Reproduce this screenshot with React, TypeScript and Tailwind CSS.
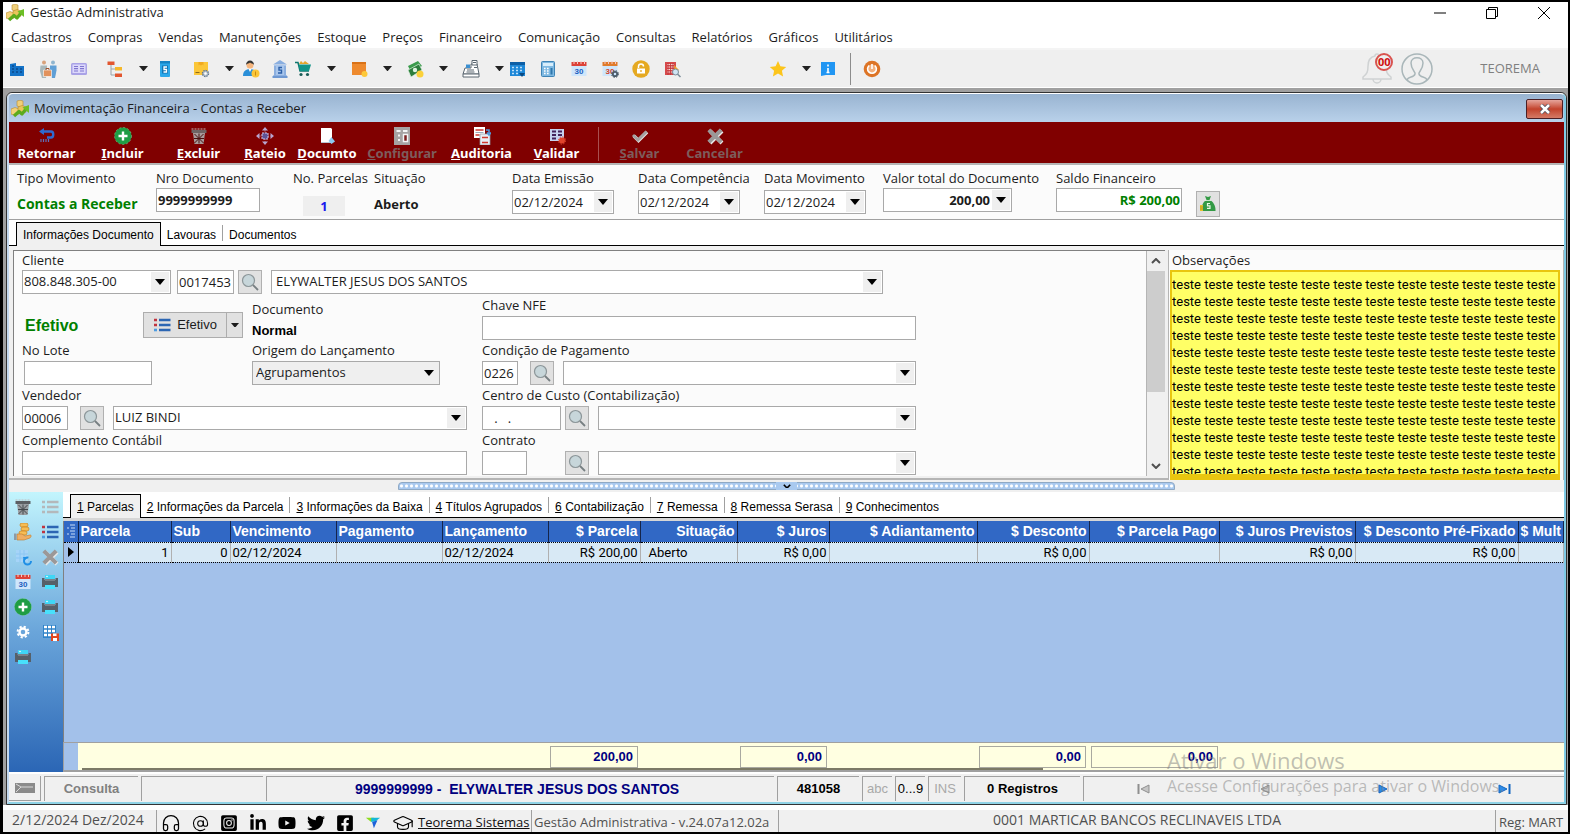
import React, { useState } from "react";
import {
  FaFacebookSquare,
  FaInstagramSquare,
  FaLinkedinIn,
  FaTwitter,
  FaYoutube,
} from "react-icons/fa";
import { AtSign, GraduationCap, Headphones } from "lucide-react";

type IconProps = { className?: string };

const Svg = ({
  children,
  className = "size-[18px]",
}: {
  children: React.ReactNode;
  className?: string;
}) => (
  <svg
    viewBox="0 0 18 18"
    className={`${className} shrink-0`}
    fill="none"
    aria-hidden="true"
  >
    {children}
  </svg>
);

/* ---------- icons ---------- */

const Logo = () => (
  <Svg>
    <path d="M6 1l3-.8L12 1v5L9 7 6 6z" fill="#efcf7a" stroke="#b98a2c" strokeWidth=".6" />
    <path d="M0 9l4-1.500L8 9v5l-4 1.500L0 14z" fill="#f3d27a" stroke="#b98a2c" strokeWidth=".6" />
    <path d="M7 7l4-1.500L15 7v5l-4 1.500L7 12z" fill="#e9c45c" stroke="#b98a2c" strokeWidth=".6" />
    <path
      d="M3 16l5-4.500 3 2.500 4-5"
      stroke="#5cab1c"
      strokeWidth="3.200"
      strokeLinejoin="round"
    />
    <path d="M11.500 7.500L18 5v8z" fill="#6cbf26" />
  </Svg>
);

const Companies = () => (
  <Svg>
    <path d="M2 4l6-1v3h8v10H2z" fill="#1473c8" />
    <path
      d="M4 6h2M4 9h2M8 9h2M12 9h2M4 12h2M8 12h2M12 12h2"
      stroke="#0b4b8d"
      strokeWidth="1.300"
    />
  </Svg>
);

const People = () => (
  <Svg>
    <circle cx="5" cy="2.500" r="2" fill="#d9a27b" />
    <circle cx="14" cy="2.500" r="2" fill="#8fb5cf" />
    <path d="M1.500 5.500H8v5l-1 7.500H3L1 11z" fill="#a9b7b9" />
    <path d="M11 5.500h6.500v5L16 18h-3l-2-7z" fill="#5f9fd6" />
    <path d="M4.500 10h8v6.500h-8z" fill="#e2925c" stroke="#fff" strokeWidth=".6" />
    <path d="M7 10V8.500h3V10" stroke="#a0522d" />
  </Svg>
);

const Card = () => (
  <Svg>
    <rect x="1" y="3" width="16" height="12" rx="1.500" fill="#a9a2e6" />
    <rect x="2.500" y="4.500" width="13" height="8.500" fill="#dcd8fb" />
    <path d="M4 6.500h4M4 8.700h4M4 11h4M10 6.500h4M10 8.700h4M10 11h4" stroke="#7f76cf" strokeWidth="1.200" />
  </Svg>
);

const Tree = () => (
  <Svg>
    <path d="M5 4v11h4M5 9h4" stroke="#9aa3a8" />
    <path d="M1.500 1.500h7V5h-7z" fill="#e2562f" />
    <path d="M9 7h7v3.500H9z" fill="#f5b82a" />
    <path d="M9 13.500h7V17H9z" fill="#e2562f" />
  </Svg>
);

const Phone = () => (
  <Svg>
    <rect x="4" y="1" width="10" height="16" rx="1" fill="#2ba8ea" />
    <rect x="4" y="1" width="10" height="2.500" fill="#1683c4" />
    <path d="M6 5.500h6v8H6z" fill="#1174b4" />
    <path d="M11 7H8v2.500h2.500V12h-3" stroke="#fff" strokeWidth="1.300" />
  </Svg>
);

const Box = () => (
  <Svg>
    <path d="M2 2h14v13H2z" fill="#fbc638" />
    <path d="M6.500 2h5v3.500l-1-1-1.500 1-1.500-1-1 1z" fill="#f1a91f" />
    <path d="M3.500 12.500h4" stroke="#8c6a1a" />
    <circle cx="13.500" cy="13.500" r="3" fill="#b9c4cf" stroke="#63788d" strokeWidth="1.400" strokeDasharray="1.500 .8" />
    <circle cx="13.500" cy="13.500" r="1.200" fill="#fff" />
  </Svg>
);

const Person = () => (
  <Svg>
    <circle cx="8" cy="5" r="3.500" fill="#f6b57c" />
    <path d="M4 5c0-6 8-6 8 0-1-2-3-1-4-2.500C7 4 5 3 4 5z" fill="#333" />
    <path d="M1 16c0-5 3-7 7-7s7 2 7 7z" fill="#2a8fd8" />
    <path d="M6.500 9h3L8 12z" fill="#fff" />
    <circle cx="13.500" cy="13.500" r="4" fill="#fbc638" />
    <path d="M13.500 11.500v4" stroke="#c98c10" />
  </Svg>
);

const Bank = () => (
  <Svg>
    <path d="M9 0l7 4.500H2z" fill="#89aee0" />
    <path d="M3 5h12v11H3z" fill="#a9c6ec" />
    <path d="M2 16h14v2H2zM4 6v9M14 6v9" fill="#6f98d2" stroke="#6f98d2" />
    <path d="M11 7.500H8v2.600h2.500V13H7" stroke="#2b5fa8" strokeWidth="1.400" />
  </Svg>
);

const Cart = () => (
  <Svg>
    <path d="M5 4l2-3 2 2 2-2 4 3z" fill="#e2a52e" />
    <path d="M1 2.500h3L6 11h9" stroke="#0f766e" strokeWidth="1.500" />
    <path d="M4.500 4.500H17L15 11H6z" fill="#109488" />
    <circle cx="7" cy="14.500" r="1.600" fill="#195b57" />
    <circle cx="13.500" cy="14.500" r="1.600" fill="#195b57" />
  </Svg>
);

const OrangeBox = () => (
  <Svg>
    <path d="M2 2h14v13H2z" fill="#ee8a2e" />
    <path d="M2 2h14v2H2z" fill="#d97218" />
    <circle cx="14.500" cy="14" r="3" fill="#fdc93a" />
  </Svg>
);

const Money = () => (
  <Svg>
    <path d="M2 6l10-5 4 5-11 6z" fill="#3a9b4c" />
    <path d="M2 10l11-6 3 6-11 7z" fill="#2c7d3c" stroke="#dff3e1" strokeWidth=".7" />
    <circle cx="9" cy="10" r="2.200" fill="#dff3e1" />
    <circle cx="14" cy="14" r="3.500" fill="#fbd13a" />
  </Svg>
);

const Register = () => (
  <Svg>
    <path d="M9 4h6l2 10H1l2-6h6z" fill="#fff" stroke="#5a6670" />
    <path d="M10 .5h5V5h-5zM1 14h16v3H1z" fill="#fff" stroke="#5a6670" />
    <path d="M11 2.500h3M5 10h7M4.500 12h8M12 7.500h3" stroke="#5a6670" />
    <path d="M4 4.500h4V8H4z" fill="#3b8fd0" />
  </Svg>
);

const CalendarBlue = () => (
  <Svg>
    <path d="M2 2h15v14H2z" fill="#1e88d8" />
    <path d="M2 2h15v3H2z" fill="#0d5fa6" />
    <path
      d="M4 7.500h2M8 7.500h2M12 7.500h2M4 10.500h2M8 10.500h2M12 10.500h2M4 13.500h2M8 13.500h2"
      stroke="#bfe0fa"
      strokeWidth="1.700"
    />
    <path d="M11 13h6l-3 4z" fill="#0a4a83" />
  </Svg>
);

const Calculator = () => (
  <Svg>
    <rect x="2.500" y="1.500" width="13" height="15" rx="1" fill="#7fb9e2" stroke="#3e83b5" />
    <path d="M4 3h10v3H4z" fill="#d8eefb" />
    <path
      d="M5 8.500h1.600M8 8.500h1.600M5 11h1.600M8 11h1.600M5 13.500h1.600M8 13.500h1.600"
      stroke="#fff"
      strokeWidth="1.500"
    />
    <path d="M11.500 8h2v6.500h-2z" fill="#2f77ad" />
  </Svg>
);

const Calendar30 = ({ gear }: { gear?: boolean }) => (
  <Svg>
    <path d="M1.500 5h15v11h-15z" fill="#cfe6fb" />
    <path d="M1.500 2h15v4h-15z" fill={gear ? "#e07b2c" : "#dd4238"} />
    <path d="M4 1v3M7.500 1v3M11 1v3M14.500 1v3" stroke="#f3c9c5" />
    <text
      x="9"
      y="13.500"
      textAnchor="middle"
      fontSize="8"
      fontWeight="bold"
      fontFamily="Liberation Sans, sans-serif"
      fill={gear ? "#d2452b" : "#1d5fbf"}
    >
      30
    </text>
    {gear && (
      <>
        <circle cx="14" cy="14" r="2.200" stroke="#4b5b68" strokeWidth="1.800" />
        <circle cx="14" cy="14" r="3.500" stroke="#4b5b68" strokeDasharray="1.400 1.400" />
      </>
    )}
  </Svg>
);

const Lock = () => (
  <Svg>
    <circle cx="9" cy="9" r="8.700" fill="#e5a921" />
    <path d="M5 8.500h8v5H5z" fill="#fff" />
    <path d="M6.500 8V6.500a2.500 2.500 0 015 0" stroke="#fff" strokeWidth="1.500" />
    <path d="M9 10v2" stroke="#e5a921" strokeWidth="1.300" />
  </Svg>
);

const SheetSearch = () => (
  <Svg>
    <path d="M2 2h11v13H2z" fill="#d6494b" />
    <path d="M4 4.500h7M4 7h7M4 9.500h7M4 12h7" stroke="#f7d3d3" strokeWidth="1.200" />
    <path d="M5 3v12M7.500 3v12M10 3v12" stroke="#b93337" strokeWidth=".8" />
    <path d="M11 5l5 5-4 3z" fill="#f0a52c" />
    <circle cx="12.500" cy="12" r="3" fill="#cfe4f3" stroke="#7b8c99" />
    <path d="M14.500 14l3 3" stroke="#7b8c99" strokeWidth="1.500" />
  </Svg>
);

const Star = () => (
  <Svg>
    <path d="M9 1l2.400 5.300 5.800.6-4.300 3.900 1.200 5.700L9 13.600l-5.100 2.900 1.200-5.700L.8 6.900l5.800-.6z" fill="#fcc51c" />
  </Svg>
);

const Info = () => (
  <Svg>
    <path d="M2 2h14v13H7l-5 1z" fill="#2196f3" />
    <path d="M9 4.500v2M9 8v4.500M7.500 12.500h3" stroke="#fff" strokeWidth="1.600" />
  </Svg>
);

const Power = () => (
  <Svg>
    <circle cx="9" cy="9" r="8.300" fill="#dd7426" />
    <circle cx="9" cy="9" r="4.600" fill="#f3b07d" />
    <path d="M6.200 5.500a4.400 4.400 0 105.600 0M9 4v5" stroke="#fff" strokeWidth="1.600" />
  </Svg>
);

const Back = () => (
  <Svg>
    <path d="M4 4.500h9c3 0 3 6 0 6H9" stroke="#2f6bd0" strokeWidth="2.400" />
    <path d="M1 4.500L6 1v7z" fill="#2f6bd0" />
    <path d="M3 12v3M5.500 12v3M8 12v3M10.500 12v3" stroke="#5f6fb8" strokeWidth="1.200" />
  </Svg>
);

const Plus = () => (
  <Svg>
    <circle cx="9" cy="9" r="8.500" fill="#1f9d45" />
    <circle cx="9" cy="9" r="8.500" stroke="#7fcf95" strokeWidth=".6" strokeDasharray="2 2" />
    <path d="M9 4.500v9M4.500 9h9" stroke="#fff" strokeWidth="2.400" />
  </Svg>
);

const Trash = ({ light }: { light?: boolean }) => (
  <Svg>
    <path d="M1.500 3h15v3h-15z" fill={light ? "#6f6363" : "#5b5f63"} />
    <path d="M3 6h12l-1.500 11h-9z" fill={light ? "#a79b9b" : "#9a9ea2"} />
    <path
      d="M4.500 7l9 9M13.500 7l-9 9M4 11.500h10M9 6.500v10"
      stroke={light ? "#4a1010" : "#44484c"}
    />
    <path d="M1.500 2h15" stroke="#c3bcbc" strokeDasharray="2 1" />
  </Svg>
);

const Move = () => (
  <Svg>
    <path
      d="M9 0l3 3.500H6zM9 18l3-3.500H6zM0 9l3.500-3v6zM18 9l-3.500-3v6z"
      fill="#b8a5cf"
    />
    <rect x="6" y="6" width="6" height="6" fill="#5f5496" stroke="#d5c8e6" strokeDasharray="2 1" />
    <path d="M9 3.500V6M9 12v2.500M3.500 9H6M12 9h2.500" stroke="#b8a5cf" strokeDasharray="1 1" />
  </Svg>
);

const Doc = () => (
  <Svg>
    <path d="M3 1h10l1 1v14H3z" fill="#fff" />
    <path d="M3 15.500h10" stroke="#b7c6d4" />
    <path d="M13.500 10l3.500 4.500-3.500 2.500-3-3z" fill="#8cc9f0" />
  </Svg>
);

const Config = () => (
  <Svg>
    <path d="M1 0h16v18H1z" fill="#a6a3a3" />
    <path d="M3.500 4h4M10 4h4.500M5 8.500h2M5 13h2" stroke="#f4f4f4" strokeWidth="2" />
    <path d="M10.500 7.500h4v7h-4z" stroke="#f4f4f4" strokeWidth="1.500" fill="#7d2020" />
  </Svg>
);

const Audit = () => (
  <Svg>
    <path d="M1 0h11v11H1z" fill="#fff" />
    <path d="M2.500 3h8M2.500 8h4" stroke="#d03a30" strokeWidth="1.500" />
    <path d="M2.500 5.500h8" stroke="#99aabb" />
    <path d="M7 7h10v11H7z" fill="#e7edf3" stroke="#8c99a6" strokeWidth=".7" />
    <path d="M9 10.500h6M9 15.500h6" stroke="#d03a30" strokeWidth="1.300" />
    <path d="M13 3h3v4M14 5.500l2 2.500 2-2.500" stroke="#4d9be0" strokeWidth="1.500" />
  </Svg>
);

const Validate = () => (
  <Svg>
    <path d="M2 2h14v12H2z" fill="#c6d2ee" />
    <path d="M4 4.500h4M10 4.500h4M4 8h4M10 8h4M4 11.500h4" stroke="#43215a" strokeWidth="1.800" />
    <circle cx="14" cy="13.500" r="3" fill="#e0442c" />
    <circle cx="14" cy="13.500" r="3.600" stroke="#e0442c" strokeDasharray="1.500 1.300" />
  </Svg>
);

const Check = () => (
  <Svg>
    <path d="M3 9l4.500 4.500L16 5" stroke="#e8e8e8" strokeWidth="3.500" />
    <path d="M2 8l5 5 8.500-8.500" stroke="#a5a1a1" strokeWidth="3" />
  </Svg>
);

const Cross = () => (
  <Svg>
    <path d="M4 4l12 12M16 4L4 16" stroke="#e8e8e8" strokeWidth="4" />
    <path d="M2.800 2.800l12.400 12.400M15.200 2.800L2.800 15.200" stroke="#9b9898" strokeWidth="4" />
  </Svg>
);

const List = ({ gray }: { gray?: boolean }) => (
  <Svg>
    <path d="M6 4h11.500M6 9h11.500M6 14h11.500" stroke={gray ? "#b4b8bb" : "#2c66b3"} strokeWidth="2.400" />
    <path d="M1 4h3M1 9h3" stroke={gray ? "#b4b8bb" : "#c0343f"} strokeWidth="2.600" />
    <path d="M1 14h3" stroke={gray ? "#b4b8bb" : "#4c9be0"} strokeWidth="2.600" />
  </Svg>
);

const Coins = () => (
  <Svg>
    <rect x="6" y="0" width="8" height="4" rx="2" fill="#f6bd55" stroke="#c9821e" strokeWidth=".7" />
    <rect x="7" y="4" width="8" height="4" rx="2" fill="#f6bd55" stroke="#c9821e" strokeWidth=".7" />
    <rect x="5" y="8" width="8" height="4" rx="2" fill="#f6bd55" stroke="#c9821e" strokeWidth=".7" />
    <path d="M3 11h5l3 2 5-1c2 0 1 2 0 3l-6 2H3z" fill="#efae62" stroke="#c07a2a" strokeWidth=".6" />
    <path d="M0 10.500h2.500V17H0z" fill="#8e9aa3" />
  </Svg>
);

const GridRefresh = () => (
  <Svg>
    <path d="M2 2h12v12H2z" fill="#a6d4f8" />
    <path d="M2 6h12M2 10h12M6 2v12M10 2v12" stroke="#8cc6f3" />
    <circle cx="13.500" cy="13" r="3.500" stroke="#1f8fe6" strokeWidth="2" strokeDasharray="17 5" />
    <path d="M9 9h5l-4 4z" fill="#1f8fe6" />
  </Svg>
);

const Printer = () => (
  <Svg>
    <path d="M4 2h10v4H4z" fill="#3fd6f5" />
    <path d="M1 5h2.500v2h11V5H17v9H1z" fill="#566069" />
    <path d="M4 6h10v2H4z" fill="#77828b" />
    <path d="M4 12h10v4H4z" fill="#48e0fb" />
    <circle cx="6" cy="3.500" r=".8" fill="#fff" />
  </Svg>
);

const Gear = () => (
  <Svg>
    <circle cx="9" cy="9" r="3.500" stroke="#fff" strokeWidth="2.400" />
    <circle cx="9" cy="9" r="5.400" stroke="#fff" strokeWidth="2" strokeDasharray="2.200 2.040" />
  </Svg>
);

const GridSave = () => (
  <Svg>
    <path d="M2 2h13v13H2z" fill="#2f83c9" />
    <path
      d="M3 4h3M7 4h3M11 4h3M3 8h3M7 8h3M11 8h3M3 12h3M7 12h3"
      stroke="#fff"
      strokeWidth="2.600"
    />
    <path d="M10 10.500h8V18h-8z" fill="#e3471f" />
    <path d="M12 10.500h3.500v2.500H12zM12 15h4v3h-4z" fill="#fff" />
  </Svg>
);

const MoneyBag = () => (
  <Svg>
    <path d="M6 1l3 1 3-1-1.500 4c3 1 6.500 5 6 11H3C2 11 4 7 7.500 5z" fill="#339a45" />
    <path d="M6 5.500h6" stroke="#e9f7e5" strokeWidth=".8" />
    <path d="M11 8.500H8.500v2.300H11v2.600H8" stroke="#e9f7e5" strokeWidth="1.200" />
    <path d="M1 10h3v6H1z" fill="#e6c22e" />
    <path d="M1 12h3M1 14h3" stroke="#a88712" strokeWidth=".7" />
  </Svg>
);

const Magnifier = () => (
  <Svg>
    <circle cx="7.500" cy="7.500" r="6" fill="#c7d6da" stroke="#8c9699" strokeWidth="1.200" />
    <path d="M12 12l5 5" stroke="#777f82" strokeWidth="1.800" />
  </Svg>
);

const TeoremaMark = () => (
  <Svg className="size-4">
    <path d="M1 3h9l-3 5z" fill="#8edb1f" />
    <path d="M7 3h10l-5 4-5 1z" fill="#14b7d8" />
    <path d="M8 8l6-2-4 9z" fill="#1d62d8" />
  </Svg>
);

const Caret = ({ className = "w-[10px]" }: IconProps) => (
  <svg viewBox="0 0 10 6" className={`${className} shrink-0`} aria-hidden="true">
    <path d="M0 0h10L5 6z" fill="currentColor" />
  </svg>
);

/* ---------- data ---------- */

const menus = [
  "Cadastros",
  "Compras",
  "Vendas",
  "Manutenções",
  "Estoque",
  "Preços",
  "Financeiro",
  "Comunicação",
  "Consultas",
  "Relatórios",
  "Gráficos",
  "Utilitários",
];

const shortcuts: {
  label: string;
  icon: React.ReactNode;
  width: string;
  menu?: boolean;
}[] = [
  { label: "Empresas", icon: <Companies />, width: "w-[31px]" },
  { label: "Clientes", icon: <People />, width: "w-[31px]" },
  { label: "Cartões", icon: <Card />, width: "w-9" },
  { label: "Plano de contas", icon: <Tree />, width: "w-[50px]", menu: true },
  { label: "Celular", icon: <Phone />, width: "w-9" },
  { label: "Produtos", icon: <Box />, width: "w-[50px]", menu: true },
  { label: "Vendedores", icon: <Person />, width: "w-[29px]" },
  { label: "Bancos", icon: <Bank />, width: "w-[23px]" },
  { label: "Pedidos", icon: <Cart />, width: "w-14", menu: true },
  { label: "Entradas", icon: <OrangeBox />, width: "w-14", menu: true },
  { label: "Contas", icon: <Money />, width: "w-14", menu: true },
  { label: "Caixa", icon: <Register />, width: "w-[46px]", menu: true },
  { label: "Agenda", icon: <CalendarBlue />, width: "w-[31px]" },
  { label: "Calculadora", icon: <Calculator />, width: "w-[31px]" },
  { label: "Calendário", icon: <Calendar30 />, width: "w-[31px]" },
  { label: "Vencimentos", icon: <Calendar30 gear />, width: "w-[31px]" },
  { label: "Bloquear", icon: <Lock />, width: "w-[31px]" },
  { label: "Consultar", icon: <SheetSearch />, width: "w-[106px]" },
  { label: "Favoritos", icon: <Star />, width: "w-[50px]", menu: true },
  { label: "Informações", icon: <Info />, width: "w-[31px]" },
];

const actions: {
  label: string;
  icon: React.ReactNode;
  width: string;
  underline?: boolean;
  disabled?: boolean;
}[] = [
  { label: "Retornar", icon: <Back />, width: "w-[75px]" },
  { label: "Incluir", icon: <Plus />, width: "w-[77px]", underline: true },
  { label: "Excluir", icon: <Trash light />, width: "w-[75px]", underline: true },
  { label: "Rateio", icon: <Move />, width: "w-[58px]", underline: true },
  { label: "Documto", icon: <Doc />, width: "w-[66px]", underline: true },
  { label: "Configurar", icon: <Config />, width: "w-[84px]", underline: true, disabled: true },
  { label: "Auditoria", icon: <Audit />, width: "w-[75px]", underline: true },
  { label: "Validar", icon: <Validate />, width: "w-[75px]", underline: true },
  { label: "Salvar", icon: <Check />, width: "w-[75px]", underline: true, disabled: true },
  { label: "Cancelar", icon: <Cross />, width: "w-[75px]", disabled: true },
];

const docTabs = ["Informações Documento", "Lavouras", "Documentos"];

const gridTabs = [
  "1 Parcelas",
  "2 Informações da Parcela",
  "3 Informações da Baixa",
  "4 Títulos Agrupados",
  "6 Contabilização",
  "7 Remessa",
  "8 Remessa Serasa",
  "9 Conhecimentos",
];

const columns = [
  { title: "Parcela", width: "w-[93px]", value: "1", right: true },
  { title: "Sub", width: "w-[59px]", value: "0", right: true },
  { title: "Vencimento", width: "w-[106px]", value: "02/12/2024" },
  { title: "Pagamento", width: "w-[106px]", value: "" },
  { title: "Lançamento", width: "w-[106px]", value: "02/12/2024" },
  { title: "$ Parcela", width: "w-[92px]", value: "R$ 200,00", right: true, money: true },
  { title: "Situação", width: "w-[97px]", value: "Aberto", money: true },
  { title: "$ Juros", width: "w-[92px]", value: "R$ 0,00", right: true, money: true },
  { title: "$ Adiantamento", width: "w-[148px]", value: "", money: true },
  { title: "$ Desconto", width: "w-[112px]", value: "R$ 0,00", right: true, money: true },
  { title: "$ Parcela Pago", width: "w-[130px]", value: "", money: true },
  { title: "$ Juros Previstos", width: "w-[136px]", value: "R$ 0,00", right: true, money: true },
  { title: "$ Desconto Pré-Fixado", width: "w-[163px]", value: "R$ 0,00", right: true, money: true },
  { title: "$ Mult", width: "", value: "" },
];

const sideTools = [
  { label: "Excluir parcela", icon: <Trash /> },
  { label: "Lista", icon: <List gray /> },
  { label: "Baixar", icon: <Coins /> },
  { label: "Detalhes", icon: <List /> },
  { label: "Recalcular", icon: <GridRefresh /> },
  { label: "Cancelar parcela", icon: <Cross /> },
  { label: "Prorrogar", icon: <Calendar30 /> },
  { label: "Imprimir boleto", icon: <Printer /> },
  { label: "Nova parcela", icon: <Plus /> },
  { label: "Imprimir recibo", icon: <Printer /> },
  { label: "Configurar grade", icon: <Gear /> },
  { label: "Salvar grade", icon: <GridSave /> },
  { label: "Imprimir", icon: <Printer /> },
];

const NOTES = Array(13).fill(Array(12).fill("teste").join(" ")).join("\n");

/* ---------- form controls ---------- */

const FIELD = "h-6 border border-[#a9a9a9] text-[13px] outline-none";

const TextField = ({
  id,
  label,
  value = "",
  className,
}: {
  id?: string;
  label?: string;
  value?: string;
  className: string;
}) => (
  <input
    id={id}
    aria-label={label}
    defaultValue={value}
    className={`${FIELD} bg-white px-px ${className}`}
  />
);

const Combo = ({
  id,
  label,
  value = "",
  className = "",
  gray = false,
  inner = "pl-[3px]",
}: {
  id?: string;
  label?: string;
  value?: string;
  className?: string;
  gray?: boolean;
  inner?: string;
}) => (
  <div className={`relative ${className}`}>
    <select
      id={id}
      aria-label={label}
      className={`${FIELD} block w-full appearance-none ${
        gray ? "bg-[#efefef]" : "bg-white"
      } ${inner}`}
    >
      <option>{value}</option>
    </select>
    <span className="pointer-events-none absolute inset-y-0.5 right-0.5 flex w-[18px] items-center justify-center bg-[#efefef] text-black">
      <Caret />
    </span>
  </div>
);

const SearchButton = ({ label }: { label: string }) => (
  <button
    aria-label={label}
    className="flex size-6 shrink-0 items-center justify-center border border-[#b0b0b0] bg-[#e1e1e1]"
  >
    <Magnifier />
  </button>
);

const Field = ({
  label,
  htmlFor,
  children,
  first = false,
}: {
  label: string;
  htmlFor?: string;
  children: React.ReactNode;
  first?: boolean;
}) => (
  <div>
    <label
      htmlFor={htmlFor}
      className={`block whitespace-nowrap ${
        first ? "leading-[19px]" : "leading-[21px]"
      }`}
    >
      {label}
    </label>
    <div className="flex">{children}</div>
  </div>
);

/* ---------- sections ---------- */

const MainToolbar = () => (
  <div className="flex h-[38px] items-center border-b border-white bg-[#efefef] pl-[5px] text-[#222]">
    {shortcuts.map((item) => (
      <button
        key={item.label}
        aria-label={item.label}
        className={`flex shrink-0 items-center gap-[15px] ${item.width}`}
      >
        {item.icon}
        {item.menu && <Caret className="w-[9px]" />}
      </button>
    ))}
    <span className="h-8 w-px bg-[#8c8c8c]" />
    <button aria-label="Sair" className="ml-3">
      <Power />
    </button>
    <div className="ml-auto flex items-center pr-7">
      <button aria-label="Notificações" className="relative mr-2">
        <svg viewBox="0 0 32 36" className="h-9 w-8" fill="none" aria-hidden="true">
          <path
            d="M14 5a2 2 0 014 0c5 1 7 5 7 10 0 6 1 8 5 11v2H2v-2c4-3 5-5 5-11 0-5 2-9 7-10zM12 28a4 4 0 008 0"
            stroke="#cfd2d3"
            strokeWidth="1.500"
          />
        </svg>
        <span className="absolute right-0 top-0.5 flex size-[18px] items-center justify-center rounded-full border-2 border-[#d9534f] bg-[#efefef] text-[11px] font-bold leading-none text-[#d01010]">
          00
        </span>
      </button>
      <svg viewBox="0 0 32 32" className="mr-[47px] size-8" fill="none" aria-hidden="true">
        <circle cx="16" cy="16" r="15" stroke="#a9b6b9" strokeWidth="1.500" />
        <path
          d="M6 27c1-4 7-2 8-6 1-2-4-4-4-11 0-7 12-7 12 0 0 7-5 9-4 11 1 4 7 2 8 6"
          stroke="#a9b6b9"
          strokeWidth="1.500"
        />
      </svg>
      <span className="text-[13px] text-[#808080]">TEOREMA</span>
    </div>
  </div>
);

const ActionBar = () => (
  <div className="flex h-[41px] bg-[#800000] pt-[5px]">
    {actions.map((action) => (
      <React.Fragment key={action.label}>
        {action.label === "Salvar" && (
          <span className="ml-1 mr-[3px] h-[34px] w-px bg-[#a85050]" />
        )}
        <button
          disabled={action.disabled}
          className={`flex shrink-0 flex-col items-center font-['Noto_Sans','Open_Sans',sans-serif] text-[13px] font-bold leading-4 ${
            action.width
          } ${action.disabled ? "text-[#7d5c5c]" : "text-white"}`}
        >
          {action.icon}
          <span>
            {action.underline ? (
              <>
                <u>{action.label[0]}</u>
                {action.label.slice(1)}
              </>
            ) : (
              action.label
            )}
          </span>
        </button>
      </React.Fragment>
    ))}
  </div>
);

const dateFields = [
  { label: "Data Emissão", width: "w-[126px]" },
  { label: "Data Competência", width: "w-[126px]" },
  { label: "Data Movimento", width: "w-[119px]" },
];

const HeaderPanel = () => (
  <div className="flex h-[57px] border-b border-t-2 border-b-[#a0a0a0] border-t-[#b5b5b5] bg-[#fbfbfb] pl-2 pt-[3px] leading-5">
    <div className="w-[139px] shrink-0">
      <div>Tipo Movimento</div>
      <div className="pt-1.5 text-sm font-bold leading-5 text-[#008000]">
        Contas a Receber
      </div>
    </div>
    <div className="w-[137px] shrink-0">
      <label htmlFor="nro" className="block">
        Nro Documento
      </label>
      <TextField id="nro" value="9999999999" className="w-[104px] font-bold" />
    </div>
    <div className="w-[81px] shrink-0">
      <div className="whitespace-nowrap">No. Parcelas</div>
      <div className="ml-2.5 mt-2 w-[42px] bg-[#efefef] text-center font-bold leading-5 text-[#1a1aee]">
        1
      </div>
    </div>
    <div className="w-[138px] shrink-0">
      <div>Situação</div>
      <div className="pt-1.5 font-bold">Aberto</div>
    </div>
    {dateFields.map(({ label, width }) => (
      <div key={label} className={`shrink-0 ${width}`}>
        <label htmlFor={label} className="block whitespace-nowrap">
          {label}
        </label>
        <Combo id={label} value="02/12/2024" className="mt-0.5 w-[102px]" inner="pl-px" />
      </div>
    ))}
    <div className="w-[173px] shrink-0">
      <label htmlFor="valor" className="block whitespace-nowrap">
        Valor total do Documento
      </label>
      <Combo
        id="valor"
        value="200,00"
        className="w-[129px]"
        inner="pr-[21px] text-right [text-align-last:right] font-bold"
      />
    </div>
    <div className="flex flex-1 items-end gap-[14px] pb-0.5">
      <div className="self-start">
        <label htmlFor="saldo" className="block">
          Saldo Financeiro
        </label>
        <TextField
          id="saldo"
          value="R$ 200,00"
          className="w-[126px] text-right font-bold text-[#008000]"
        />
      </div>
      <button
        aria-label="Ver saldo"
        className="flex h-[26px] w-6 items-center justify-center border border-[#b0b0b0] bg-[#e1e1e1]"
      >
        <MoneyBag />
      </button>
    </div>
  </div>
);

const Tabs = ({
  tabs,
  active,
  onChange,
  mnemonic = false,
}: {
  tabs: string[];
  active: number;
  onChange: (i: number) => void;
  mnemonic?: boolean;
}) => (
  <div
    role="tablist"
    className="flex h-[26px] items-end border-b border-black bg-white font-['Liberation_Sans',sans-serif] text-xs text-black"
  >
    {tabs.map((tab, i) => (
      <div key={tab} className="flex items-end">
        {i > active + 1 && <span className="mb-1 h-4 w-px bg-[#a0a0a0]" />}
        <button
          role="tab"
          aria-selected={active === i}
          onClick={() => onChange(i)}
          className={`whitespace-nowrap px-1.5 pt-0.5 leading-5 ${
            active === i
              ? "-mb-px ml-[7px] border border-b-0 border-black bg-[#f0f0f0] pb-px"
              : ""
          }`}
        >
          {mnemonic ? (
            <>
              <u>{tab[0]}</u>
              {tab.slice(1)}
            </>
          ) : (
            tab
          )}
        </button>
      </div>
    ))}
  </div>
);

const DocumentForm = () => (
  <div className="flex h-[234px] gap-[3px] border-b-2 border-[#b5b5b5] bg-[#f0f0f0] pb-0.5 pt-1">
    <div className="ml-1 flex min-w-0 flex-1 border-l border-t border-[#808080] bg-[#fbfbfb]">
      <div className="min-w-0 flex-1 overflow-hidden pl-2">
        <Field label="Cliente" htmlFor="cliente" first>
          <Combo id="cliente" value="808.848.305-00" className="w-[149px]" inner="pl-px" />
          <TextField label="Código do cliente" value="0017453" className="ml-1.5 mr-1 w-[57px]" />
          <SearchButton label="Buscar cliente" />
          <Combo
            label="Nome do cliente"
            value="ELYWALTER JESUS DOS SANTOS"
            className="ml-[9px] w-[612px]"
            inner="pl-1"
          />
        </Field>
        <div className="mt-px flex gap-[15px]">
          <div className="w-[445px] shrink-0">
            <div className="flex">
              <div className="w-[230px] shrink-0">
                <div className="flex h-[45px] items-end pb-0.5">
                  <span className="w-[121px] pl-[3px] font-['Liberation_Sans',sans-serif] text-base font-bold leading-6 text-[#008000]">
                    Efetivo
                  </span>
                  <button className="flex h-[26px] w-[84px] items-center justify-center gap-1.5 border border-[#adadad] bg-[#e1e1e1] font-['Liberation_Sans',sans-serif] text-[13px]">
                    <List />
                    Efetivo
                  </button>
                  <button
                    aria-label="Opções"
                    className="flex h-[26px] w-4 items-center justify-center border border-l-0 border-[#adadad] bg-[#e1e1e1]"
                  >
                    <Caret className="w-2" />
                  </button>
                </div>
                <Field label="No Lote" htmlFor="lote">
                  <TextField id="lote" className="ml-0.5 w-[128px]" />
                </Field>
              </div>
              <div>
                <div className="h-[45px] pt-1 leading-[21px]">
                  <div>Documento</div>
                  <div className="font-['Liberation_Sans',sans-serif] font-bold text-black">
                    Normal
                  </div>
                </div>
                <Field label="Origem do Lançamento" htmlFor="origem">
                  <Combo id="origem" value="Agrupamentos" className="w-[188px]" gray />
                </Field>
              </div>
            </div>
            <Field label="Vendedor" htmlFor="vendedor">
              <TextField id="vendedor" value="00006" className="mr-3 w-[46px]" />
              <SearchButton label="Buscar vendedor" />
              <Combo label="Nome do vendedor" value="LUIZ BINDI" className="ml-[9px] flex-1" inner="pl-px" />
            </Field>
            <Field label="Complemento Contábil" htmlFor="complemento">
              <TextField id="complemento" className="w-full" />
            </Field>
          </div>
          <div className="w-[434px] shrink-0">
            <Field label="Chave NFE" htmlFor="chave">
              <TextField id="chave" className="w-full" />
            </Field>
            <Field label="Condição de Pagamento" htmlFor="condicao">
              <TextField id="condicao" value="0226" className="mr-3 w-9" />
              <SearchButton label="Buscar condição" />
              <Combo label="Nome da condição" className="ml-[9px] flex-1" />
            </Field>
            <Field label="Centro de Custo (Contabilização)" htmlFor="centro">
              <TextField id="centro" value="   .   ." className="mr-1 w-[79px]" />
              <SearchButton label="Buscar centro de custo" />
              <Combo label="Nome do centro de custo" className="ml-[9px] flex-1" />
            </Field>
            <Field label="Contrato" htmlFor="contrato">
              <TextField id="contrato" className="mr-[38px] w-[45px]" />
              <SearchButton label="Buscar contrato" />
              <Combo label="Nome do contrato" className="ml-[9px] flex-1" />
            </Field>
          </div>
        </div>
      </div>
      <div className="flex w-[19px] shrink-0 flex-col border-l border-[#b5b5b5] bg-[#f0f0f0] text-[#505050]">
        <button aria-label="Rolar para cima" className="flex h-5 items-center justify-center">
          <svg viewBox="0 0 10 6" className="w-[10px]" fill="none">
            <path d="M1 5l4-4 4 4" stroke="currentColor" strokeWidth="2" />
          </svg>
        </button>
        <span className="h-[121px] bg-[#cdcdcd]" />
        <button aria-label="Rolar para baixo" className="mt-auto flex h-5 items-center justify-center">
          <svg viewBox="0 0 10 6" className="w-[10px]" fill="none">
            <path d="M1 1l4 4 4-4" stroke="currentColor" strokeWidth="2" />
          </svg>
        </button>
      </div>
    </div>
    <div className="-mb-1 flex w-[396px] shrink-0 flex-col border-x border-[#b5b5b5] bg-[#fbfbfb] pl-px pr-[3px]">
      <label htmlFor="obs" className="pl-0.5 leading-5">
        Observações
      </label>
      <textarea
        id="obs"
        defaultValue={NOTES}
        className="block min-h-0 flex-1 resize-none overflow-hidden border-2 border-b-[6px] border-[#e9c60f] bg-[#ffff66] pt-1 font-['Roboto','Open_Sans',sans-serif] text-[13px] leading-[17px] text-black"
      />
    </div>
  </div>
);

const Splitter = () => (
  <div className="flex h-3 items-center justify-center bg-[#f0f0f0]">
    <div className="flex h-2 w-1/2 items-center justify-center rounded-t border border-[#8fa9c4] bg-[#a9c9ef] bg-[radial-gradient(circle,#ffffff_1px,transparent_2px)] bg-[length:5px_6px]">
      <button
        aria-label="Recolher painel"
        className="flex h-2 w-[21px] items-center justify-center bg-[#a9c9ef] text-black"
      >
        <svg viewBox="0 0 10 6" className="w-2" fill="none">
          <path d="M1 1l4 4 4-4" stroke="currentColor" strokeWidth="2" />
        </svg>
      </button>
    </div>
  </div>
);

const ParcelGrid = () => (
  <div className="flex min-h-[250px] flex-1 flex-col border-t-3 border-[#d6d6d6] bg-[#a3c1ea] text-[13px]">
    <div className="flex-1 overflow-hidden border-l border-[#808080]">
      <table className="w-full table-fixed border-collapse">
        <thead className="font-['Liberation_Sans',sans-serif] text-sm">
          <tr className="h-[21px] bg-[#3168c5] text-white">
            <th scope="col" className="w-[14px] border-r border-[#15254a] p-0">
              <svg viewBox="0 0 10 14" className="mx-auto h-[14px] w-[10px]" aria-label="Linha">
                <path d="M4 1h5M5 4h4M4 7h5M5 10h4M4 13h5M1 4h2M1 10h2" stroke="#c9dcf7" />
              </svg>
            </th>
            {columns.map((col) => (
              <th
                key={col.title}
                scope="col"
                className={`whitespace-nowrap border-r border-[#15254a] px-0.5 py-0 font-bold ${
                  col.width
                } ${col.money ? "text-right" : "text-left"}`}
              >
                {col.title}
              </th>
            ))}
          </tr>
        </thead>
        <tbody className="font-['Roboto','Liberation_Sans',sans-serif]">
          <tr className="h-5 border-y border-dotted border-black bg-[#d8e9f5] text-black">
            <td className="border-r border-black bg-[#a3c1ea] p-0">
              <svg viewBox="0 0 6 10" className="mx-auto h-[10px] w-[6px]" aria-hidden="true">
                <path d="M0 0v10l6-5z" fill="#000" />
              </svg>
            </td>
            {columns.map((col) => (
              <td
                key={col.title}
                className={`whitespace-nowrap border-r border-[#b0b0b0] py-0 pr-[2px] leading-[17px] ${
                  col.right ? "text-right" : ""
                } ${col.title === "Situação" ? "pl-2" : "pl-0.5"}`}
              >
                {col.value}
              </td>
            ))}
          </tr>
        </tbody>
      </table>
    </div>
    <div className="flex h-[30px] border-b-2 border-l border-t border-[#a0a0a0] bg-[#ffffe1] font-['Liberation_Sans',sans-serif] font-bold text-[#000080]">
      <span className="w-[14px] bg-[#a3c1ea]" />
      <div className="min-w-0 flex-1">
        <div className="flex pl-[472px] pt-[3px] text-right leading-5">
          <output className="h-[22px] w-[88px] border border-[#a9a9a0] pr-1">200,00</output>
          <output className="ml-[102px] h-[22px] w-[87px] border border-[#a9a9a0] pr-1">0,00</output>
          <output className="ml-[152px] h-[22px] w-[107px] border border-[#a9a9a0] pr-1">0,00</output>
          <output className="ml-[5px] h-[22px] w-[127px] border border-[#a9a9a0] pr-1">0,00</output>
        </div>
        <div className="ml-1 h-0.5 w-[961px] bg-[#7c7a66]" />
      </div>
    </div>
  </div>
);

const CELL =
  "flex h-[25px] shrink-0 items-center border-l border-t border-[#a0a0a0] font-['Liberation_Sans',sans-serif] font-bold";

const NavButton = ({
  label,
  first,
  flip,
  bar,
}: {
  label: string;
  first?: boolean;
  flip?: boolean;
  bar?: boolean;
}) => (
  <button aria-label={label} disabled={first} className="flex flex-1 justify-center">
    <svg
      viewBox="0 0 14 10"
      className={`h-[10px] w-[14px] ${flip ? "-scale-x-100" : ""}`}
      fill="none"
      aria-hidden="true"
    >
      <path d="M12 1v8L4 5z" fill={first ? "#c5c5c5" : "#2f8be6"} stroke={first ? "#8f8f8f" : "#1467c0"} />
      {bar && <path d="M1.500 0v10" stroke={first ? "#8f8f8f" : "#1467c0"} strokeWidth="2" />}
    </svg>
  </button>
);

const GridStatus = () => (
  <div className="flex h-[30px] items-center gap-[3px] border-t-2 border-white bg-[#f0f0f0]">
    <span className="flex h-[25px] w-8 shrink-0 items-center justify-center border-b border-r border-[#a0a0a0]">
      <svg viewBox="0 0 20 10" className="h-[10px] w-5" aria-hidden="true">
        <path d="M0 0h20v10H0z" fill="#8a8a8a" />
        <path d="M1 9l5-5h12M1 1l5 3" stroke="#d8d8d8" fill="none" />
      </svg>
    </span>
    <span className={`${CELL} w-[94px] justify-center text-[#808080]`}>Consulta</span>
    <span className={`${CELL} w-[122px]`} />
    <span className={`${CELL} w-[508px] whitespace-pre pl-[88px] text-sm text-[#000080]`}>
      {"9999999999 -  ELYWALTER JESUS DOS SANTOS"}
    </span>
    <span className={`${CELL} w-[82px] justify-center text-black`}>481058</span>
    <span className={`${CELL} w-[30px] justify-center text-[#a9a9a9]`}>
      <span className="font-normal">abc</span>
    </span>
    <span className={`${CELL} w-[30px] justify-center text-black`}>
      <span className="font-normal">0...9</span>
    </span>
    <span className={`${CELL} w-[33px] justify-center text-[#a9a9a9]`}>
      <span className="font-normal">INS</span>
    </span>
    <span className={`${CELL} w-[116px] justify-center text-black`}>0 Registros</span>
    <div className="flex h-[25px] flex-1 items-center border-l border-t border-[#a0a0a0]">
      <NavButton label="Primeiro" first bar />
      <NavButton label="Anterior" first />
      <NavButton label="Próximo" flip />
      <NavButton label="Último" flip bar />
    </div>
  </div>
);

const AppStatus = () => (
  <div className="flex h-[22px] items-center overflow-hidden bg-[#f0f0f0] text-[13px] text-[#505050]">
    <span className="w-[153px] shrink-0 pb-0.5 pl-[9px] text-sm leading-5">2/12/2024 Dez/2024</span>
    <div className="flex shrink-0 items-center gap-[11px] border-l border-[#a0a0a0] pl-1 pt-1 text-black">
      <a href="#suporte" aria-label="Suporte"><Headphones className="size-5" strokeWidth={1.5} /></a>
      <a href="#email" aria-label="E-mail"><AtSign className="size-[17px]" strokeWidth={1.5} /></a>
      <a href="#instagram" aria-label="Instagram"><FaInstagramSquare className="size-[18px]" /></a>
      <a href="#linkedin" aria-label="LinkedIn"><FaLinkedinIn className="size-[18px]" /></a>
      <a href="#youtube" aria-label="YouTube"><FaYoutube className="size-[18px]" /></a>
      <a href="#twitter" aria-label="Twitter"><FaTwitter className="size-[18px]" /></a>
      <a href="#facebook" aria-label="Facebook"><FaFacebookSquare className="size-[18px]" /></a>
      <a href="#teorema" aria-label="Teorema"><TeoremaMark /></a>
      <a href="#cursos" aria-label="Cursos"><GraduationCap className="size-[22px]" strokeWidth={1.25} /></a>
    </div>
    <a href="#site" className="ml-1 w-[113px] shrink-0 whitespace-nowrap pt-0.5 leading-5 text-[#111] underline">
      Teorema Sistemas
    </a>
    <span className="w-[248px] shrink-0 whitespace-nowrap border-x border-[#a0a0a0] pl-0.5 pt-0.5 leading-5">
      Gestão Administrativa - v.24.07a12.02a
    </span>
    <span className="flex-1 pb-0.5 text-center text-sm leading-5">
      0001 MARTICAR BANCOS RECLINAVEIS LTDA
    </span>
    <span className="w-[73px] shrink-0 overflow-hidden whitespace-nowrap border-l border-[#a0a0a0] pl-[3px] pt-0.5 leading-5">
      Reg: MART
    </span>
  </div>
);

const App = () => {
  const [docTab, setDocTab] = useState(0);
  const [gridTab, setGridTab] = useState(0);

  return (
    <div className="relative flex min-h-screen flex-col overflow-hidden border-2 border-l-[3px] border-black bg-white font-['Open_Sans',sans-serif] text-[13px] text-[#1c1c1c]">
      <header className="flex h-[22px] items-center pl-[3px]">
        <Logo />
        <span className="ml-1.5">Gestão Administrativa</span>
        <div className="ml-auto flex items-center gap-10 pr-[18px] text-black">
          <button aria-label="Minimizar">
            <svg viewBox="0 0 12 12" className="size-3"><path d="M0 6h12" stroke="currentColor" /></svg>
          </button>
          <button aria-label="Restaurar">
            <svg viewBox="0 0 12 12" className="size-3" fill="none">
              <path d="M.5 2.500h9v9h-9zM2.500 2V.500h9v9H10" stroke="currentColor" />
            </svg>
          </button>
          <button aria-label="Fechar">
            <svg viewBox="0 0 12 12" className="size-3"><path d="M0 0l12 12M12 0L0 12" stroke="currentColor" /></svg>
          </button>
        </div>
      </header>
      <nav className="flex h-[26px] items-center gap-4 border-b-2 border-[#f4f4f4] pl-2 pt-1">
        {menus.map((menu) => (
          <button key={menu}>{menu}</button>
        ))}
      </nav>
      <MainToolbar />

      <main className="flex flex-1 flex-col bg-[#a0a0a0] pl-[3px] pr-px pt-1">
        <div className="flex flex-1 flex-col rounded-t-md border border-[#333] bg-[#f0f0f0]">
          <div className="flex flex-1 flex-col rounded-t-md border-x-2 border-b-2 border-t border-b-[#8fd3e6] border-l-[#c3d8ee] border-r-[#7fcbe6] border-t-white">
            <div className="flex h-7 items-center rounded-t bg-linear-to-b from-[#99b4d1] to-[#b9d1ea] pl-0.5 pt-0.5">
              <Logo />
              <span className="ml-[5px]">Movimentação Financeira - Contas a Receber</span>
              <button
                aria-label="Fechar janela"
                className="ml-auto mr-px flex h-5 w-[37px] items-center justify-center rounded-xs border border-[#4b1f24] bg-linear-to-b from-[#e5a49b] via-[#c2422c] to-[#d47a66]"
              >
                <svg viewBox="0 0 12 10" className="h-[10px] w-3">
                  <path d="M2 1l8 8M10 1L2 9" stroke="#444a5a" strokeWidth="4" />
                  <path d="M2 1l8 8M10 1L2 9" stroke="#fff" strokeWidth="2.500" />
                </svg>
              </button>
            </div>
            <ActionBar />
            <HeaderPanel />
            <Tabs tabs={docTabs} active={docTab} onChange={setDocTab} />
            <DocumentForm />
            <Splitter />
            <div className="flex flex-1">
              <div className="grid w-[54px] shrink-0 auto-rows-[25px] grid-cols-2 content-start items-center justify-items-center bg-linear-to-b from-[#c3f5fd] via-[#6aa5da] to-[#2b66b5] pt-0.5">
                {sideTools.map((tool) => (
                  <button key={tool.label} aria-label={tool.label}>
                    {tool.icon}
                  </button>
                ))}
              </div>
              <div className="flex min-w-0 flex-1 flex-col">
                <Tabs tabs={gridTabs} active={gridTab} onChange={setGridTab} mnemonic />
                <ParcelGrid />
              </div>
            </div>
            <GridStatus />
          </div>
        </div>
      </main>

      <div className="h-[5px] bg-white" />
      <AppStatus />

      <div className="pointer-events-none absolute bottom-[34px] right-[57px] w-[344px] whitespace-nowrap text-[#808080]/50">
        <div className="text-[22px] leading-7">Ativar o Windows</div>
        <div className="text-base leading-6">Acesse Configurações para ativar o Windows.</div>
      </div>
    </div>
  );
};

export default App;
